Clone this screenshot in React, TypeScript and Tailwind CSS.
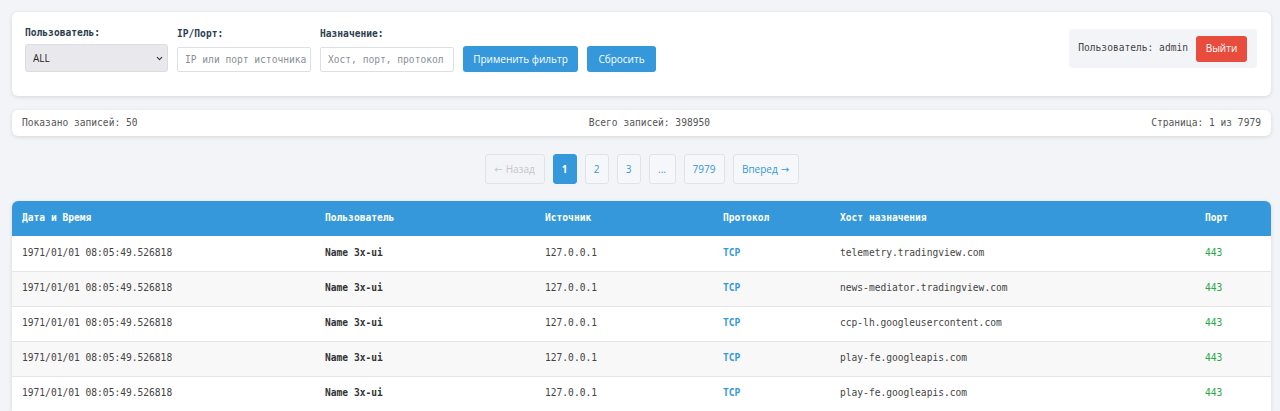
import { ChevronDown } from "lucide-react";

const mono = "font-['DejaVu_Sans_Mono','Liberation_Mono',monospace]";
const sans = "font-['Open_Sans','Noto_Sans',sans-serif]";
const arrow = "font-['DejaVu_Sans',sans-serif]";

type Row = {
  time: string;
  user: string;
  source: string;
  proto: string;
  host: string;
  port: string;
};

const rows: Row[] = [
  { time: "1971/01/01 08:05:49.526818", user: "Name 3x-ui", source: "127.0.0.1", proto: "TCP", host: "telemetry.tradingview.com", port: "443" },
  { time: "1971/01/01 08:05:49.526818", user: "Name 3x-ui", source: "127.0.0.1", proto: "TCP", host: "news-mediator.tradingview.com", port: "443" },
  { time: "1971/01/01 08:05:49.526818", user: "Name 3x-ui", source: "127.0.0.1", proto: "TCP", host: "ccp-lh.googleusercontent.com", port: "443" },
  { time: "1971/01/01 08:05:49.526818", user: "Name 3x-ui", source: "127.0.0.1", proto: "TCP", host: "play-fe.googleapis.com", port: "443" },
  { time: "1971/01/01 08:05:49.526818", user: "Name 3x-ui", source: "127.0.0.1", proto: "TCP", host: "play-fe.googleapis.com", port: "443" },
];

function Filters() {
  return (
    <section className="flex items-start justify-between rounded-md bg-white px-[13px] pt-[15px] pb-[24px] shadow-[0_1px_4px_rgba(0,0,0,0.12)]">
      <div className="flex items-end gap-[9px]">
        <label className="flex flex-col gap-[5px]">
          <span className={`${mono} text-[9.6px] leading-[12px] font-bold text-[#2c3e50]`}>Пользователь:</span>
          <div className="relative w-[143px]">
            <select
              className={`${sans} block h-[28px] w-full appearance-none rounded-[3px] border border-[#dcdce0] bg-[#e9e9ed] pl-[7px] text-[10px] text-[#222]`}
              defaultValue="ALL"
            >
              <option value="ALL">ALL</option>
            </select>
            <ChevronDown
              size={9}
              strokeWidth={3}
              className="pointer-events-none absolute top-[10px] right-[4px] text-[#333]"
            />
          </div>
        </label>
        <label className="flex flex-col gap-[7px]">
          <span className={`${mono} text-[9.6px] leading-[12px] font-bold text-[#2c3e50]`}>IP/Порт:</span>
          <input
            placeholder="IP или порт источника"
            className={`${mono} block h-[25px] w-[134px] rounded-[2px] border border-[#dcdfe3] bg-white pr-[1px] pl-[7px] text-[9.6px] placeholder:text-[#8a8f96]`}
          />
        </label>
        <label className="flex flex-col gap-[7px]">
          <span className={`${mono} text-[9.6px] leading-[12px] font-bold text-[#2c3e50]`}>Назначение:</span>
          <input
            placeholder="Хост, порт, протокол"
            className={`${mono} block h-[25px] w-[134px] rounded-[2px] border border-[#dcdfe3] bg-white pr-[1px] pl-[7px] text-[9.6px] placeholder:text-[#8a8f96]`}
          />
        </label>
        <button
          type="button"
          className={`${sans} h-[26px] w-[115px] rounded-[3px] bg-[#3498db] text-[10px] text-white`}
        >
          Применить фильтр
        </button>
        <button
          type="button"
          className={`${sans} h-[26px] w-[69px] rounded-[3px] bg-[#3498db] text-[10px] text-white`}
        >
          Сбросить
        </button>
      </div>
      <div className="mt-[2px] mr-[1px] flex h-[39px] items-center gap-[8px] rounded-[4px] bg-[#f3f4f8] pr-[10px] pl-[9px]">
        <span className={`${mono} text-[9.6px] text-[#444]`}>Пользователь: admin</span>
        <button
          type="button"
          className={`${sans} h-[26px] w-[51px] rounded-[3px] bg-[#e74c3c] text-[10px] text-white`}
        >
          Выйти
        </button>
      </div>
    </section>
  );
}

function Stats() {
  return (
    <section
      className={`${mono} mt-[14px] flex h-[26px] items-center justify-between rounded-md bg-white px-[10px] text-[9.6px] text-[#555] shadow-[0_1px_4px_rgba(0,0,0,0.12)]`}
    >
      <span>Показано записей: 50</span>
      <span className="ml-[10px]">Всего записей: 398950</span>
      <span>Страница: 1 из 7979</span>
    </section>
  );
}

function Pager() {
  const base = `${sans} flex h-[30px] items-center justify-center gap-[3px] rounded-[3px] border text-[10px]`;
  return (
    <nav className="mt-[18px] flex justify-center gap-[8px]">
      <span className={`${base} w-[60px] border-[#dfe2e7] bg-[#f3f4f8] text-[#c3c7cd]`}>
        <span className={arrow}>←</span>Назад
      </span>
      <span className={`${base} w-[24px] border-[#3498db] bg-[#3498db] font-bold text-white`}>1</span>
      <span className={`${base} w-[24px] border-[#dfe2e7] bg-[#f6f7fa] text-[#3498db]`}>2</span>
      <span className={`${base} w-[24px] border-[#dfe2e7] bg-[#f6f7fa] text-[#3498db]`}>3</span>
      <span className={`${base} w-[27px] border-[#dfe2e7] bg-[#f6f7fa] text-[#3498db]`}>...</span>
      <span className={`${base} w-[41px] border-[#dfe2e7] bg-[#f6f7fa] text-[#3498db]`}>7979</span>
      <span className={`${base} w-[66px] border-[#dfe2e7] bg-[#f6f7fa] text-[#3498db]`}>
        Вперед<span className={arrow}>→</span>
      </span>
    </nav>
  );
}

function LogTable() {
  return (
    <div className="mt-[17px] overflow-hidden rounded-t-md bg-white shadow-[0_1px_4px_rgba(0,0,0,0.12)]">
      <table className={`${mono} w-full table-fixed border-collapse text-left text-[9.6px]`}>
        <colgroup>
          <col className="w-[303px]" />
          <col className="w-[220px]" />
          <col className="w-[178px]" />
          <col className="w-[117px]" />
          <col className="w-[365px]" />
          <col />
        </colgroup>
        <thead>
          <tr className="h-[35px] bg-[#3498db] text-white">
            <th className="px-[10px] font-bold">Дата и Время</th>
            <th className="px-[10px] font-bold">Пользователь</th>
            <th className="px-[10px] font-bold">Источник</th>
            <th className="px-[10px] font-bold">Протокол</th>
            <th className="px-[10px] font-bold">Хост назначения</th>
            <th className="px-[10px] font-bold">Порт</th>
          </tr>
        </thead>
        <tbody>
          {rows.map((row, i) => (
            <tr
              key={i}
              className={`h-[35px] border-b border-[#e6e6e6] text-[#444] ${i % 2 === 1 ? "bg-[#f8f8f8]" : "bg-white"}`}
            >
              <td className="px-[10px]">{row.time}</td>
              <td className="px-[10px] font-bold text-[#333]">{row.user}</td>
              <td className="px-[10px]">{row.source}</td>
              <td className="px-[10px] font-bold text-[#3498db]">{row.proto}</td>
              <td className="px-[10px]">{row.host}</td>
              <td className="px-[10px] text-[#28a745]">{row.port}</td>
            </tr>
          ))}
        </tbody>
      </table>
    </div>
  );
}

export default function App() {
  return (
    <div className="min-h-screen bg-[#f3f4f8] px-[12px] pt-[12px] pb-[20px]">
      <div className="w-[1259px]">
        <Filters />
        <Stats />
        <Pager />
        <LogTable />
      </div>
    </div>
  );
}
